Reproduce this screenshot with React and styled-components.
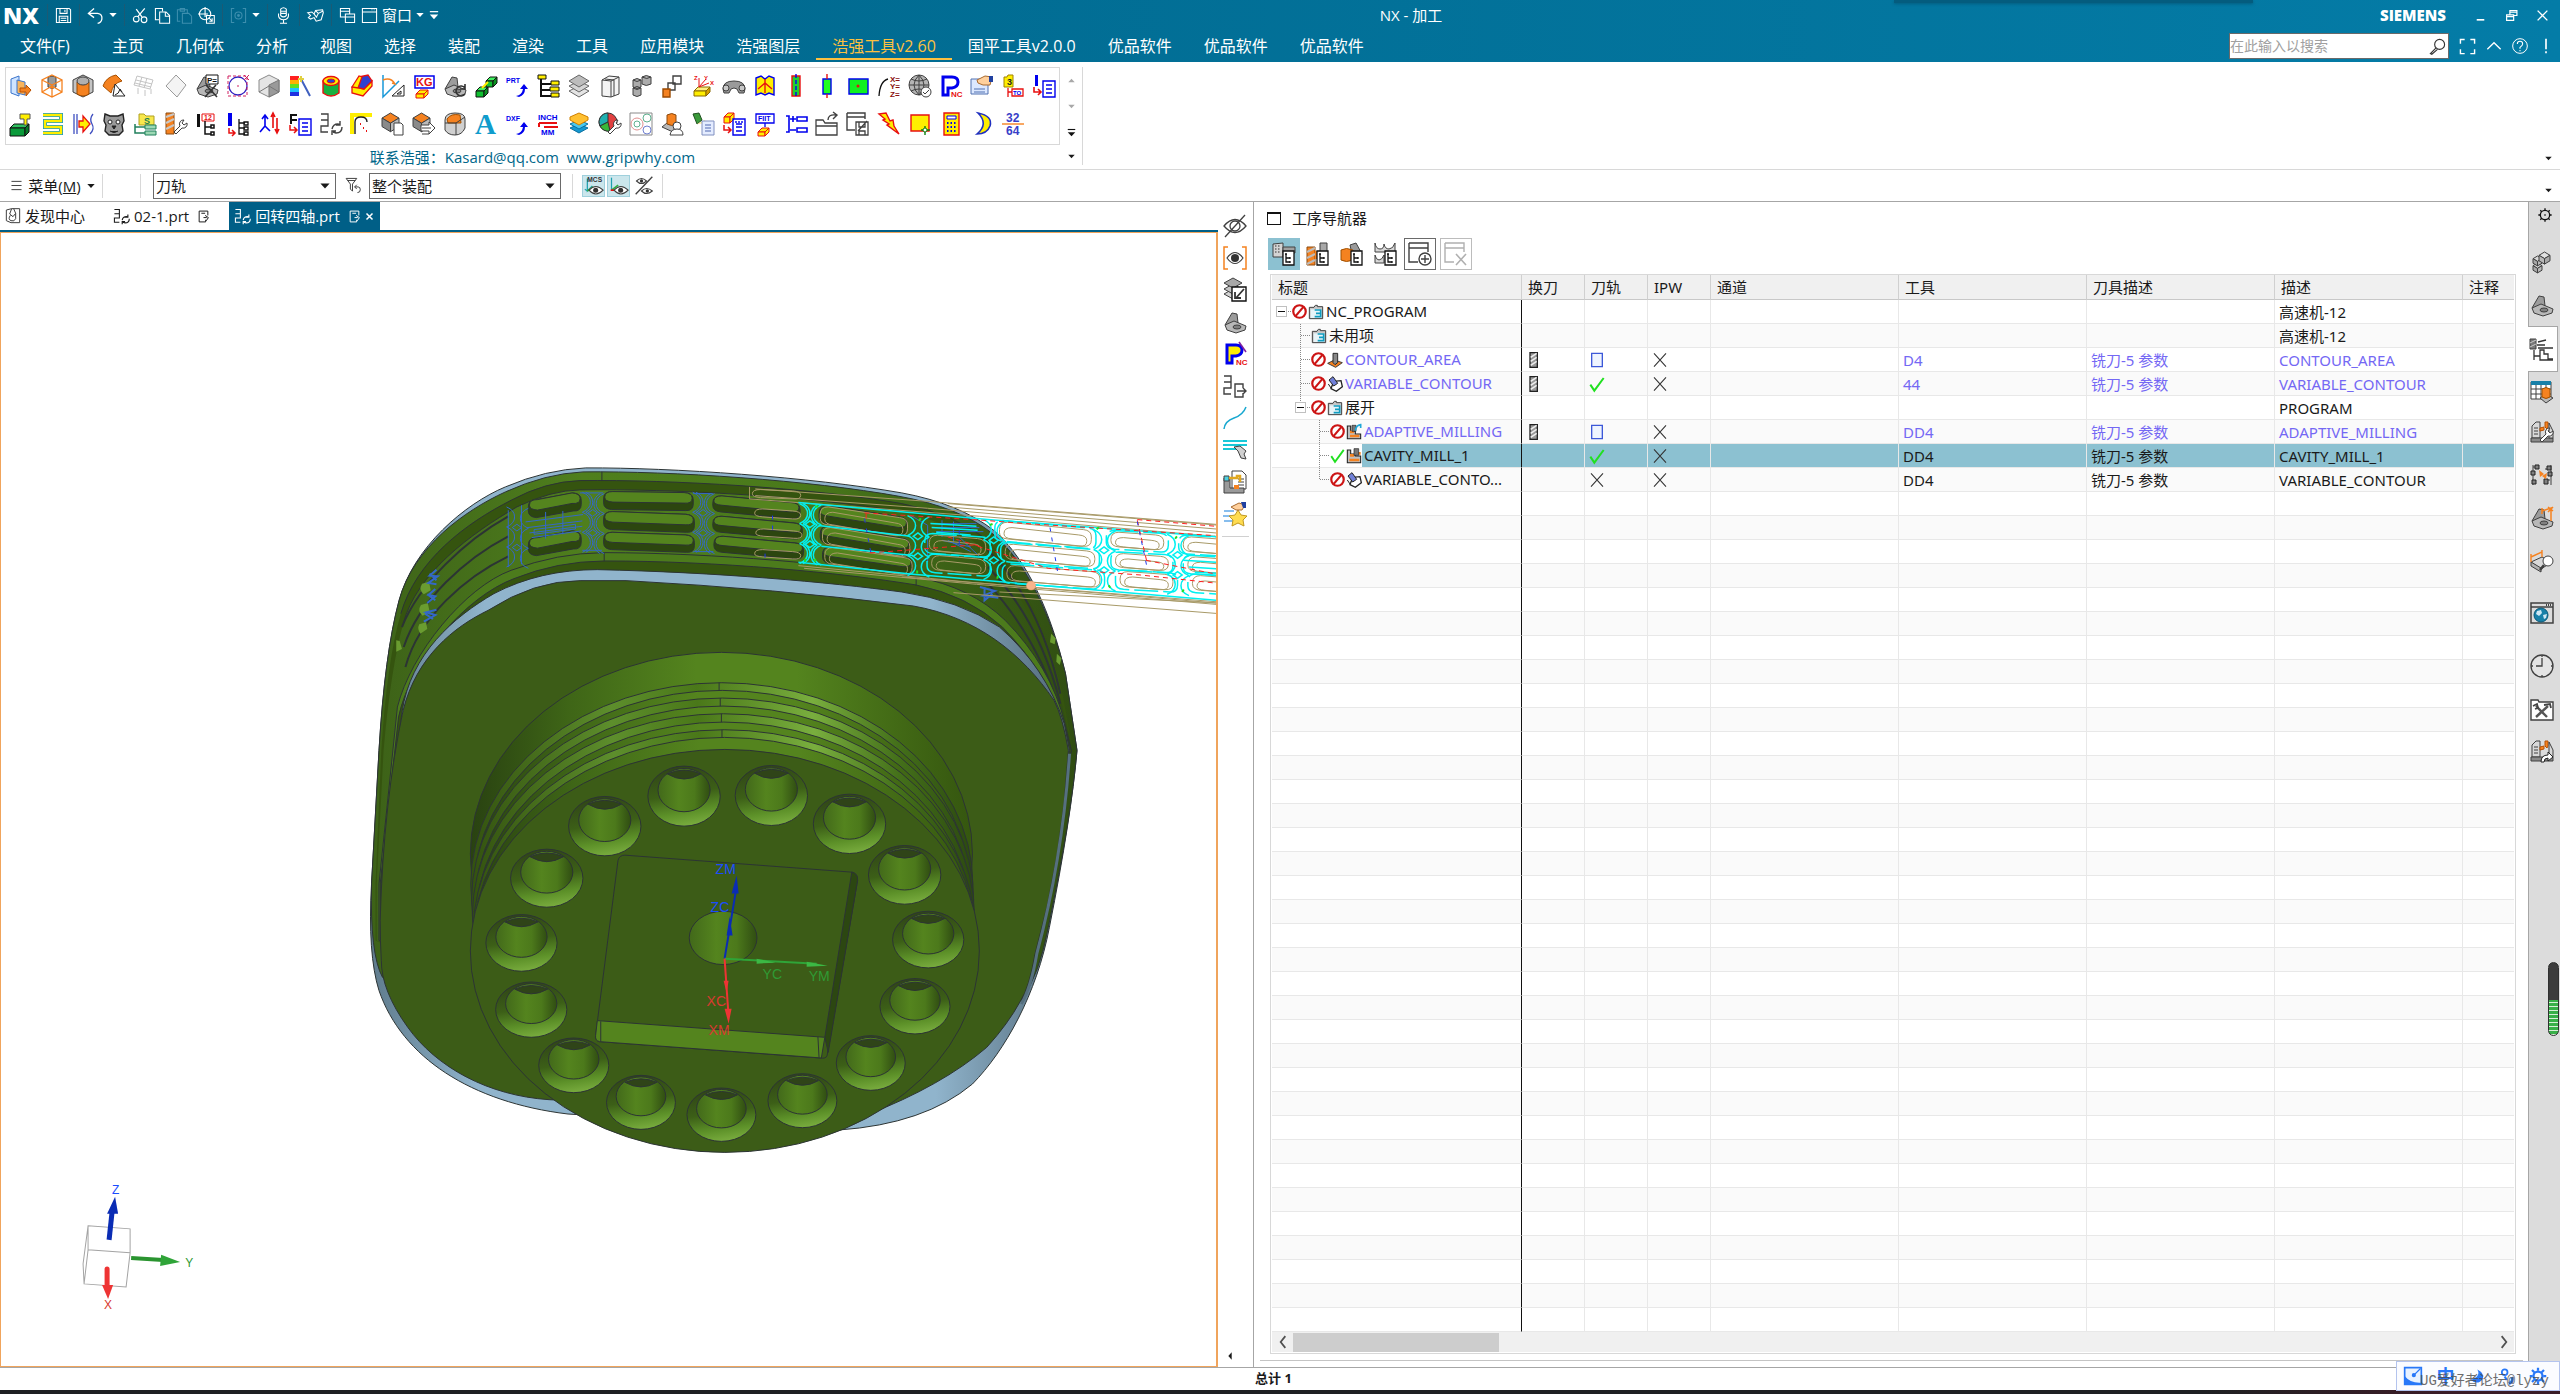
import { Fragment } from 'react'
import styled, { createGlobalStyle } from 'styled-components'

const GlobalStyle = createGlobalStyle`
    * {
        box-sizing: border-box;
    }

    body {
        margin: 0;
        background: #ffffff;
        color: #1a1a1a;
        font-family: 'Open Sans', 'Noto Sans CJK SC', sans-serif;
        font-size: 15px;
        line-height: 20px;
    }

    button, input, select {
        margin: 0;
        padding: 0;
        border: 0;
        background: none;
        color: inherit;
        font: inherit;
    }

    svg {
        display: block;
        flex-shrink: 0;
    }
`

/* ---------- icons: [d, fill, stroke, width] or { t, x, y, s, c } ---------- */

const K = '#404040'
const O = '#f58220'
const B = '#0000ee'
const R = '#e81010'
const Y = '#ffee00'

const circ = (x, y, r) => `M${x - r} ${y}a${r} ${r} 0 1 0 ${2 * r} 0a${r} ${r} 0 1 0 ${-2 * r} 0z`

const cube = (x, y, s, a, b, c, line = K) => [
    [`M${x} ${y + s * 0.3}l${s * 0.5} ${-s * 0.3}l${s * 0.5} ${s * 0.3}l${-s * 0.5} ${s * 0.3}z`, a, line],
    [`M${x} ${y + s * 0.3}v${s * 0.5}l${s * 0.5} ${s * 0.3}v${-s * 0.5}z`, b, line],
    [`M${x + s} ${y + s * 0.3}v${s * 0.5}l${-s * 0.5} ${s * 0.3}v${-s * 0.5}z`, c, line],
]

const brick = (x, y, w, h, top, front, side, line = K) => [
    [`M${x} ${y + 4}l4-4h${w}l-4 4z`, top, line],
    [`M${x} ${y + 4}h${w}v${h}h${-w}z`, front, line],
    [`M${x + w} ${y + 4}l4-4v${h}l-4 4z`, side, line],
]

const bracket = [
    ['M2 15L9 3l5 1 1 9z', '#9c9c9c', K],
    ['M2 15l9-4 12 5-1 4-9 3-9-3z', '#b8b8b8', K],
    ['M10 17a4 2 0 1 0 8 0a4 2 0 1 0-8 0z', '#808080', K],
]

const machine = [
    ['M2 6l4-4h4v16H2z', '#d8d8d8', K],
    ['M4 8h4M4 11h4M4 14h4', 'none', K],
    ['M1 18h22v4H1z', '#8a8a8a', K],
    ['M15 2h3v5l-1 2-2-2zM10 8l4-1v3l-4 1z', O, '#b85000'],
    ['M19 3l4 8v7h-4z', '#d8d8d8', K],
]

const treePage = [
    ['M11 9h11v14h-11z', '#fff', '#111', 1.3],
    ['M14 12v8h4M14 16h4M13 12h2M18 15v2M18 19v2', 'none', '#111', 1.3],
]

const wrench = ['M23 11a4 4 0 0 1-5 5l-6 6-2-2 6-6a4 4 0 0 1 4-6l-2 3 2 2z', '#fff', K]

const icons = {
    moveFace: [['M2 5l8-3v20l-8-3z', '#cfe4ff', '#3b74cc'], ['M8 6l8 2v13l-8-2z', '#f8b45c', '#3b74cc'], ['M11 14h6v-3l5 5-5 6v-4h-6z', O, '#b85000']],
    wireBox: [['M8 3q4-2 8 0v10q-4 3-8 0z', '#9a9a9a', K], ['M12 1l10 5v12l-10 5-10-5V6zM2 6l10 5 10-5M12 11v12M2 18l10-6 10 6', 'none', O, 1.3]],
    boxCylinder: [['M12 1l10 5v12l-10 5-10-5V6z', '#c4c4c4', K], ['M6 8v12q6 4 12 0V8z', O, '#9c4a00'], ['M6 7a6 4 0 1 0 12 0a6 4 0 1 0-12 0z', '#b0b0b0', K]],
    extractFace: [['M1 12Q4 3 14 1l6 6q-9 2-11 12z', O, '#a85000'], ['M11 22l2-12 10 12z', '#fff', '#222'], ['M13 21q4-1 5-6l2 3', 'none', '#222']],
    ghostGrid: [['M4 2l16 4-3 9L1 11zM9 3L6 12M14 4l-3 10M3 6l16 4M2 9l16 4M5 14v6M12 16v6M18 15v5', 'none', '#c4c4c4']],
    diamond: [['M12 1l10 10-9 12L2 12z', '#f4f4f4', '#9a9a9a']],
    paramDelete: [...bracket, ['M11 1h12v9h-12z', '#fff', '#111'], ['M11 11l11 12M21 11L10 23', 'none', '#333', 1.6], { t: 'P=', x: 12, y: 9, s: 8, c: '#111' }],
    measureCircle: [[circ(12, 12, 9), 'none', '#3020c0', 1.3], ['M2 2h19v20H2z', 'none', '#d02060', 1, '3 2'], ['M18 1l5 5M23 1l-5 5M12 11v2', 'none', '#d02060']],
    grayCube: [['M12 1l10 5v12l-10 5-10-5V6z', '#e4e4e4', '#8a8a8a'], ['M12 11l10-5v12l-10 5z', '#9a9a9a', '#777'], ['M2 18l10-6 10 6', 'none', '#777']],
    rainbow: [['M2 2h9v4H2z', '#ff2020'], ['M2 6h9v4H2z', '#ffb000'], ['M2 10h9v4H2z', '#60e020'], ['M2 14h9v4H2z', '#20c0ff'], ['M2 18h9v4H2z', '#2030e0'], ['M13 5l9 17', 'none', '#4060c0', 2], ['M13 2v6M10 5h6', 'none', '#e0d040', 2]],
    tube: [['M4 7v12q8 6 16 0V7z', '#18b040', R, 1.4], ['M4 7a8 4.500 0 1 0 16 0a8 4.500 0 1 0-16 0z', Y, R, 1.4], ['M8 7a4 2 0 1 0 8 0a4 2 0 1 0-8 0z', '#3040d0', R]],
    channelBlock: [['M2 13l7-4v5l5 1 8-8v5L13 22l-11-3z', Y, R, 1.3], ['M9 3l9-2 4 6-8 8-5-1-2-3z', '#3040d0', R, 1.3], ['M2 13l7-11 3 1-4 11z', Y, R, 1.3]],
    angleRuler: [['M2 1v22L18 7', 'none', '#1898d8', 1.5], ['M2 6q8-3 12 4l-3-1', 'none', O, 1.5], ['M23 11v11H11zM20 17v3h-4z', '#fff', '#222']],
    kg: [['M3 2h19v12H3z', '#fff', B, 1.5], { t: 'KG', x: 4, y: 12, s: 11, c: R }, ...brick(4, 16, 8, 4, Y, Y, Y, R)],
    reuse: [...bracket, ['M22 14a5 5 0 1 0 0 6M22 10v5h-5', 'none', '#333', 1.6]],
    cubePair: [...brick(2, 13, 8, 6, '#40f060', '#10c030', '#0a9020', '#111'), ...brick(12, 3, 7, 6, '#40f060', '#10c030', '#0a9020', '#111'), ['M8 14l6-6', 'none', Y, 2]],
    prt: [{ t: 'PRT', x: 1, y: 9, s: 7, c: B }, ['M11 22q6-1 7-7h-3l4-5 4 5h-3q0 6-6 8z', B]],
    treeYellow: [['M5 5v17h12M5 10h10M5 16h10', 'none', '#111', 2], ['M2 1h8v4H2zM15 7h8v4h-8zM14 13h9v4h-9zM15 19h8v4h-8z', Y, '#111']],
    layers: [['M12 12l10 5-10 6-10-6z', '#e4e4e4', '#666'], ['M12 7l10 5-10 6-10-6z', '#d4d4d4', '#666'], ['M12 1l10 6-10 6L2 7z', '#bcbcbc', '#666']],
    book: [['M4 6l7-4 10 1v17l-8 3-9-1z', '#f4f4f4', K], ['M4 6l9 1v16M7 5l9 1v16M13 7l8-4', 'none', K]],
    canisters: [['M4 14q4-3 8 0v7q-4 3-8 0zM4 6q4-3 8 0v7q-4 3-8 0zM13 3q4-3 9 0v7q-5 3-9 0z', '#acacac', K], ['M4 14q4 3 8 0M4 6q4 3 8 0M13 3q5 3 9 0', 'none', K]],
    squares: [['M13 2h8v8h-8zM8 9h7v7H8z', '#fff', K, 1.4], ['M3 15h7v8H3z', O, '#9c4a00', 1.4]],
    axisBox: [...brick(3, 13, 12, 5, '#fff080', Y, '#d8a000', '#8a6a00'), ['M8 13V4M8 13l10-4M8 13l7-8', 'none', R], { t: 'Z', x: 3, y: 6, s: 6, c: R }, { t: 'Y', x: 13, y: 6, s: 6, c: R }, { t: 'X', x: 19, y: 11, s: 6, c: R }],
    pipe: [['M1 15q0-8 11-8t11 8l-1 4h-5l-2-4q-3-2-6 0l-2 4H2z', '#9a9a9a', K], [circ(4, 14, 3), '#c8c8c8', K], [circ(20, 14, 3), '#c8c8c8', K]],
    mapPin: [['M3 4l5-2 4 3 4-3 5 2v17l-5-2-4 2-4-2-5 2z', Y, B, 1.4], ['M12 5v14M5 15l7-6 7 6', 'none', R, 1.4]],
    greenBar: [['M8 2h8v20H8z', '#20d030', R, 1.4], ['M12 0v24', 'none', B, 1.4, '4 2']],
    greenPin: [['M8 5h8v15H8z', '#20ff20', B, 1.4], ['M12 0v5M12 20v4', 'none', R, 1.4]],
    greenRect: [['M3 5h19v15H3z', '#10f020', B, 1.4], [circ(12, 12, 1.5), R]],
    xyz: [['M2 22q1-15 9-17', 'none', '#111', 1.3], { t: 'X=', x: 13, y: 8, s: 8, c: '#8a1010' }, { t: 'Y=', x: 13, y: 15, s: 8, c: '#8a1010' }, { t: 'Z=', x: 13, y: 23, s: 8, c: '#8a1010' }],
    globeCheck: [[circ(11, 11, 10), '#b4b4b4', K], ['M1 11h20M11 1v20M3 5q8 4 16 0M3 17q8-4 16 0M11 1q-10 10 0 20M11 1q10 10 0 20', 'none', K], [circ(18, 18, 5), '#fff', K], ['M15 18l2 2 4-4', 'none', K]],
    postNc: [['M4 21V3h9q6 0 6 5t-6 6H9v7z', '#fff', B, 3], { t: 'NC', x: 12, y: 23, s: 8, c: R }],
    handCard: [['M1 5h17v15H1z', '#dce8ff', '#5070b0'], ['M4 15h11M4 18h11', 'none', '#5070b0'], ['M7 6l8-4 7 1-2 8h-7l-5-2z', '#ffd09c', '#a86a30'], ['M19 2h4v6h-4z', '#2040a0']],
    numberTo: [['M3 3h3l1-2h5v12H3z', Y, '#a08000'], { t: '3', x: 6, y: 11, s: 9, c: '#222' }, ['M7 14v9M7 18h4M11 15h11v7h-11z', 'none', R, 1.3], { t: 'TO', x: 12, y: 21, s: 6, c: B }],
    listBlue: [['M3 1h3v11H3z', B], ['M2 13v5h6M6 15l3 3-3 3', 'none', R, 1.6], ['M11 7h12v16h-12zM14 11h6M14 15h6M14 19h6', 'none', B, 1.4]],
    greenMachine: [...brick(1, 12, 15, 8, '#30c060', '#0a9a3a', '#087828', '#111'), ['M11 2h10v5h-3v6h-3V7h-4z', Y, '#555']],
    yellowZig: [['M3 3h18v6H5v6h16v6H3', 'none', '#1898c8', 4], ['M3 3h18v6H5v6h16v6H3', 'none', Y, 2.4]],
    yellowArrow: [['M3 2v20M6 2v20M22 2q-4 5-1 10t-2 10', 'none', '#4050c0', 1.3], ['M8 9h4V4l7 8-7 8v-5H8z', Y, R, 1.3]],
    tiger: [['M3 2l5 2h8l5-2 1 7-2 4 1 6-4 4H7l-4-4 1-6-2-4z', '#9a9a9a', '#222', 1.4], [circ(8, 10, 2), '#fff', '#222'], [circ(16, 10, 2), '#fff', '#222'], ['M10 14h4l-2 3zM8 19q4 3 8 0', '#222', '#222']],
    folderTree: [['M6 2h5l2 2h8v9H6z', '#f8e84c', '#b0a020'], { t: 'S', x: 11, y: 12, s: 9, c: '#208050' }, ['M2 12v9h10M2 15h10', 'none', '#20805c', 1.5], ['M12 13h11v4H12zM12 19h11v4H12z', '#9cd8b4', '#20805c']],
    drillWrench: [['M2 1h8v21H2z', O, '#8a4a10'], ['M2 5l8-3M2 11l8-4M2 17l8-4', 'none', '#c8c8c8', 2], wrench],
    tree12: [['M2 2h3v13H2z', '#111'], ['M7 2h12v7H7z', '#fff', R], { t: '12', x: 9, y: 8, s: 7, c: R }, ['M10 9v13h6M10 15h6M16 13h3v3h-3zM16 20h3v3h-3z', 'none', '#111', 1.5]],
    treeBlue: [['M2 1h4v13H2z', B], ['M3 16v5h6M6 18l3 3-3 3', 'none', R, 1.5], ['M13 7v15h6M13 11h6M13 16h6M18 10h4v3h-4zM18 15h4v3h-4zM18 20h4v3h-4z', 'none', '#111', 1.3]],
    axes: [['M8 14V4M5 7l3-4 3 4M8 14l-5 6M8 14l5 5', 'none', B, 1.6], ['M16 3v13M20 20V6M14 5l2-4 2 4M18 17l2 4 2-4', 'none', R, 1.6]],
    treeList: [['M3 2v10M3 3h6M3 8h6', 'none', '#111', 2], ['M2 13v5h6M6 15l3 3-3 3', 'none', R, 1.5], ['M11 7h12v16h-12zM14 11h6M14 15h6M14 19h6', 'none', B, 1.4]],
    zigRefresh: [['M2 2h7v6H2M2 8h7v6H2v6h7', 'none', K, 1.3], ['M13 17q1-5 6-5l2 1M21 9v4h-4M23 15q0 6-6 6l-3-1M13 23v-4h4', 'none', K, 1.4]],
    yellowPath: [['M2 22V3h20', 'none', Y, 4], ['M5 22V10q0-5 6-5t6 5', '#fff', '#222', 1.4], ['M10 12h1M13 16h1M16 19h1', 'none', R, 2]],
    boxCopy: [...cube(1, 1, 17, O, '#8a8a8a', '#bababa'), ['M13 11h7l2 2v10h-9z', '#fff', K]],
    boxStack: [...cube(1, 1, 17, O, '#8a8a8a', '#bababa'), ['M9 13h8v-3l6 6-6 6v-3H9z', '#fff', K], ['M10 16h9M10 22h7', 'none', K]],
    boxRound: [['M2 8q0-7 10-7t10 6v9q-3 7-10 7T2 18z', '#d0d0d0', K], ['M4 7q4-6 13-4l1 8H5z', O, '#a05000'], ['M2 11h11l9-6M13 11v12', 'none', K]],
    letterA: [{ t: 'A', x: 1, y: 22, s: 29, c: '#109ccc', serif: true }],
    dxf: [{ t: 'DXF', x: 1, y: 9, s: 7, c: B }, ['M11 22q6-1 7-7h-3l4-5 4 5h-3q0 6-6 8z', B]],
    inch: [{ t: 'INCH', x: 2, y: 8, s: 8, c: B }, ['M3 11h18M8 15h14M3 11v4', 'none', R, 2], { t: 'MM', x: 5, y: 23, s: 8, c: B }],
    layersColor: [['M12 12l9 4-9 5-9-5z', '#1498d0', '#0a70a0'], ['M12 8l9 4-9 5-9-5z', '#48c8f0', '#0a70a0'], ['M12 1l9 4v3l-9 5-9-5V5z', '#ffc030', '#d08000']],
    colorWrench: [[circ(10, 10, 9), '#e04040', '#333'], ['M10 10V1a9 9 0 0 0-8 13z', '#20b0b0', '#333'], ['M10 10l-8 4a9 9 0 0 0 10 5z', '#38b838', '#333'], wrench],
    circles: [['M1 1h22v22H1z', 'none', '#8a8a8a'], [circ(8, 12, 6), 'none', '#e09090'], [circ(8, 12, 3), 'none', '#60b090'], [circ(18, 6, 4), 'none', '#60b090'], [circ(18, 18, 4), 'none', '#7080d0']],
    stampUser: [['M2 15l5-4h8l4 4-6 5z', '#b8b8b8', K], ['M7 3q5-3 9 0v9q-4 3-9 0z', O, '#8a4a10'], [circ(17, 14, 4), '#fff', K], ['M10 23q1-6 7-6t6 6z', '#fff', K]],
    lampList: [['M2 2l6-1 3 7-5 4z', '#3a9a3a', '#205020'], ['M6 12l8-4 1 3z', '#ffe890'], ['M11 9h12v14H11z', '#e4ecff', '#8090c0'], ['M14 13h6M14 16h6M14 19h6', 'none', '#5068b0']],
    boxList: [...brick(2, 1, 6, 6, Y, Y, Y, R), ['M2 13v5h6M6 15l3 3-3 3', 'none', R, 1.5], ['M11 7h12v16h-12zM14 12h6M14 15h6M14 19h6M14 9v2M17 9v2M20 9v2', 'none', B, 1.4]],
    fit: [['M3 2h18v9H3zM12 11v4', '#fff', B, 1.3], { t: 'FIIT', x: 5, y: 9, s: 7, c: B }, ...brick(5, 16, 7, 4, Y, Y, Y, R)],
    plusMinus: [['M2 4h3v16H2M6 7h6M9 4v6M6 18h6M13 5h10v4H13zM13 16h10v4H13z', 'none', B, 1.6]],
    openOut: [['M1 8h7l2 3h12v12H1zM1 14h21', '#fff', K, 1.3], ['M13 8q0-6 8-5M18 0l4 3-4 4', 'none', K, 1.4]],
    windowSave: [['M1 1h18v6M1 1v17h8M1 5h18', 'none', K, 1.4], ['M10 10h12v13H10zM13 10v5h6v-5M13 23v-4h6v4M21 9l-9 10', '#fff', K, 1.3]],
    bolt: [['M2 2l7-1 4 8 3-1 1 6 5 8-12-9 2-1-6-4 2-1z', Y, R, 1.4]],
    yellowSquare: [['M3 3h18v16H3z', Y, R, 1.4], ['M17 14v9M13 18h9', 'none', '#108010', 1.4], [circ(17, 18, 2), '#fff', '#108010']],
    calc: [['M5 1h15v22H5z', Y, R, 1.4], ['M8 4h9v3H8z', '#fff', B], ['M8 11h10M8 15h10M8 19h10', 'none', B, 1.8, '1.5 2']],
    moon: [['M8 1q15 3 12 13-3 8-13 8 12-10 1-21z', Y, '#2030c0', 1.6]],
    n3264: [{ t: '32', x: 5, y: 10, s: 12, c: '#3840c8' }, ['M1 12h22', 'none', O, 1.4], { t: '64', x: 5, y: 23, s: 12, c: '#3840c8' }],

    eyeOff: [['M1 12q11-13 22 0-11 13-22 0z', 'none', K, 1.3], [circ(12, 12, 5), 'none', K, 1.3], ['M2 23L22 1', 'none', K, 1.3]],
    eyeFrame: [['M5 1H1v22h4M19 1h4v22h-4', 'none', O, 1.5], ['M4 12q8-11 16 0-8 11-16 0z', 'none', K, 1.2], [circ(12, 12, 4), '#333']],
    layersGo: [['M10 11l9 5-9 5-9-5z', '#d4d4d4', K], ['M10 6l9 5-9 5-9-5z', '#c4c4c4', K], ['M10 0l9 5-9 5-9-5z', '#a8a8a8', K], ['M9 9h14v14H9z', '#fff', '#111', 1.4], ['M21 11l-8 9M12 14v6h6', 'none', '#333', 1.8]],
    bracketGray: bracket,
    postPurple: [['M4 21V3h9q6 0 6 5t-6 6H9v7z', Y, B, 3], ['M16 0l7 10', 'none', '#8020a0', 1.6], { t: 'NC', x: 13, y: 23, s: 8, c: R }],
    zigExport: [['M1 2h7v6H1M1 8h7v6H1v6h7', 'none', K, 1.4], ['M20 14v-4h-8v13h8v-4M14 17h9M20 14l3 3-3 3', 'none', K, 1.4]],
    curve: [['M1 23q1-8 10-11T23 1', 'none', '#18a8d0', 1.5]],
    linesWrench: [['M0 3h24M0 7h24M0 11h14', 'none', '#18c8d8', 2], ['M11 9l6-1 6 5-2 3 2 5-5-1-3-7z', '#d0d0d0', K]],
    machineDoc: [['M9 1h10l4 4v14H9z', '#fff', K], ['M15 9h6M15 12h6M15 15h6', 'none', K], ['M1 8h6v10h14v5H1z', '#9a9a9a', K], ['M1 6h5v5H1z', '#50d0e0', K], ['M6 8h8v-2h3v6', 'none', '#e0a820', 2.5], ['M11 15h5v4h-5z', O]],
    starHand: [['M1 9h10M0 14h8M1 19h9', 'none', '#60a8e8', 1.5], ['M15 8l3 5 6 1-4 4 1 6-6-3-6 3 1-6-4-4 6-1z', '#ffdc50', '#c09820'], ['M8 5l8-4 6 2-3 5h-6z', '#ffd09c', '#a86a30'], ['M18 0h5v6h-3z', '#2040a0']],

    gear: [[circ(12, 12, 7), 'none', '#111', 2], ['M12 2v3M12 19v3M2 12h3M19 12h3M5 5l2 2M17 17l2 2M19 5l-2 2M5 19l2-2M12 11v2', 'none', '#111', 2]],
    parts: [...cube(3, 12, 9, '#d8d8d8', '#a8a8a8', '#b8b8b8'), ...cube(3, 5, 9, '#d8d8d8', '#a8a8a8', '#b8b8b8'), ...cube(9, 1, 11, '#e0e0e0', '#b8b8b8', '#a8a8a8')],
    opNav: [['M1 2h6v10H1z', '#7a7a7a', K], ['M1 6l6-3M1 10l6-3', 'none', '#ccc'], ['M9 5l8-2M8 8h8M9 11h15M5 13v10M5 19h6v-6h4v4h4v5h5M11 19v4h13', 'none', '#333', 1.3]],
    gridTool: [['M1 2h20v17H1z', '#fff', K], ['M1 1h20v4H1z', '#1880a8'], ['M1 9h20M1 14h20M6 5v14M11 5v14M16 5v14', 'none', K], ['M10 18l6-4 7 4-7 5z', '#b8b8b8', K], ['M12 9q4-3 8 0v8q-4 3-8 0z', O, '#a05000']],
    machineWrench: [...machine, wrench],
    nodes: [['M3 2v20M3 4h5M3 10h2M21 2v20M20 6h-5M20 17h-3', 'none', K], ['M5 2h4v4H5zM1 8h4v4H1zM2 17h4v4H2zM17 3h4v4h-4zM18 9h4v4h-4zM14 16h4v5h-4z', '#808080', '#222'], ['M9 7l5 4-4 3zM12 13l5-3-1 6z', O]],
    bracketDim: [...bracket, ['M12 5l9-3v13M12 2v6M18 1l5 4M23 1l-5 5', 'none', O, 1.5]],
    blockZoom: [['M1 13l11-5 10 5-11 7z', '#d8d8d8', K], ['M1 13v4l10 6v-4z', '#b0b0b0', K], ['M1 8l11-5M1 5v8M12 1v7', 'none', O, 1.4], [circ(18, 12, 5), '#fff', K], ['M14 16l-4 5', 'none', K, 2.5]],
    globeWindow: [['M1 2h22v20H1zM1 6h22', '#dcdcdc', K, 1.5], [circ(11, 14, 7), '#1880a8', '#0a5878'], ['M7 10l4-1 1 3-3 3-3-2zM13 14l4-1-1 4-2 1z', '#cfe8f4'], ['M16 4h1M18 4h1M20 4h1', 'none', '#111', 1.5]],
    clock: [[circ(12, 12, 11), '#e4e4e4', K, 1.3], ['M12 4v8H6M12 1v2M12 21v2M1 12h2M21 12h2', 'none', K, 1.3]],
    toolFolder: [['M1 3h7l1 2h14v18H1z', '#fff', K, 1.4], ['M6 9l11 11M18 9L6 20', 'none', '#555', 2.4], ['M14 8l6-1 1 4M3 9l4-2 1 4-3 1', 'none', '#444', 1.8]],
    machineGo: [...machine, ['M11 23q0-7 7-7v-3l5 5-5 4v-3q-4 0-4 4z', '#fff', '#222']],

    folder: [['M2 5h7l2-3h3v2h8v18H2z', '#c8c8c8', K, 1.5], ['M4 8h16v13H4z', '#e8f4f8'], ['M10 9h9v5h-7M19 14v5h-9', 'none', '#109cc0', 2.5]],
    contourArea: [['M1 17l10-5 12 4-10 7z', O, '#333', 1.4], ['M9 2h7v14l-4 3-3-3z', '#888', '#222', 1.4]],
    variable: [['M10 8l11-1 2 9-9 7-8-4z', '#fff', '#222', 2], ['M3 6l6-5 7 10-6 4z', '#7080d8', '#222', 1.5], ['M2 12l4 6', 'none', '#222', 1.5]],
    adaptive: [['M2 3v19h20v-7h-8v-4H7V3z', '#c0c0c0', '#222', 1.6], ['M6 18h14M6 12h6', 'none', O, 4], ['M9 2h6v9H9z', '#777', '#222'], ['M14 10q1-8 8-9v5', 'none', '#20a8d8', 2.5]],
    cavity: [['M2 3v19h20V12h-8V9H7V3z', '#c0c0c0', '#222', 1.6], ['M5 18h15M6 11h6M16 8h6', 'none', O, 4], ['M12 1h7v10h-7z', '#777', '#222']],
    blocked: [[circ(12, 12, 10), '#fff', '#cc1414', 3.5], ['M6 19L18 5', 'none', '#cc1414', 3.5]],
    check: [['M2 13l6 9L22 3', 'none', '#20e020', 3]],
    cross: [['M3 2l18 20M21 2L3 22', 'none', '#333', 1.6]],
    cutter: [['M6 1h11v22H6z', '#999', '#222', 2], ['M7 8l9-6M7 14l9-6M7 20l9-6', 'none', '#eee', 2.4]],
    sheet: [['M4 2h16v20H4z', '#eef4ff', '#3c58d8', 2]],

    viewProgram: [['M1 2l10-1v14H1z', '#d4d4d4', K], ['M3 4h6M3 7h6M3 10h6', 'none', '#333', 1.2, '1.5 1.5'], ['M11 5h12v6H11z', '#a0a0a0', K], ...treePage],
    viewTool: [['M1 5h8v18H1z', O, '#8a4a10'], ['M1 10l8-4M1 16l8-4M1 22l8-4', 'none', '#bbb', 2], ['M14 1h7v10h-7z', '#a8a8a8', K], ['M9 9h6v8H9z', O], ...treePage],
    viewGeometry: [['M10 3l6-2 6 11-8 9z', '#9a9a9a', K], ['M1 8q5-3 12 0v10q-7 3-12 0z', O, '#a05000'], ...treePage],
    viewMethod: [['M1 1q1 6 5 6t4-5q1 5 5 5t6-6v9H1z', '#d8d8d8', K], ['M1 13q1 5 4 5t5-5v8H1z', '#d8d8d8', K], ...treePage],
    windowAdd: [['M1 1h19v9M1 1v19h9M1 6h19', 'none', K, 1.4], [circ(17, 17, 6), '#fff', K, 1.4], ['M17 13v8M13 17h8', 'none', K, 1.4]],
    windowDelete: [['M1 1h19v9M1 1v19h9M1 6h19', 'none', '#b0b0b0', 1.4], ['M12 12l10 11M22 12L12 23', 'none', '#b0b0b0', 1.6]],

    mcs: [['M4 3v15l6-6M4 18l-3-2', 'none', '#20a0b0', 1.5], ['M4 18l7-5', 'none', '#30b040', 2], { t: 'MCS', x: 4, y: 7, s: 8, c: '#333' }, ['M6 17q8-9 17 0-9 9-17 0z', '#fff', K, 1.3], [circ(14, 17, 3), '#333']],
    wcs: [['M3 2v14', 'none', '#20a0b0', 1.5], ['M3 17l8-6', 'none', '#30b040', 2], ['M2 17h4', 'none', R, 2], ['M6 17q8-9 17 0-9 9-17 0z', '#fff', K, 1.3], [circ(14, 17, 3), '#333']],
    eyesOff: [['M3 6q6-6 12 0-6 6-12 0zM9 18q6-6 13 0-7 6-13 0z', 'none', K, 1.3], [circ(9, 6, 2), '#333'], [circ(16, 18, 2), '#333'], ['M2 22L22 1', 'none', K, 1.6]],
    filter: [['M3 2h15l-6 8v10l-3-3v-7zM5 5h11', 'none', K, 1.4], ['M15 14h5q3 0 3 4t-4 4M18 11l-3 3 3 3', 'none', K, 1.4]],
    discover: [['M2 3l8-2h12v21H9l-7-3z', 'none', K, 1.5], ['M10 1l-3 8 5 4 4-5-3-7M16 8v8q-2 5-7 3t-1-8', 'none', K, 1.5]],
    tabDoc: [['M20 10V2H4v20h12v-4', 'none', 'currentColor', 1.8], ['M12 14h6M15 10l6 4-4 6M8 6h7', 'none', 'currentColor', 1.8]],
    tabZig: [['M2 2h7v6H2M2 8h7v6H2v6h7', 'none', 'currentColor', 1.5], ['M13 17q1-5 6-5l2 1M21 9v4h-4M23 15q0 6-6 6l-3-1M13 23v-4h4', 'none', 'currentColor', 1.6]],
    close: [['M4 4l16 16M20 4L4 20', 'none', 'currentColor', 4]],

    save: [['M2 2h18l2 2v18H2z', 'none', '#fff', 1.5], ['M7 2v7h10V2M6 22v-9h12v9M8 16h8M8 19h8M14 4v3', 'none', '#fff', 1.5]],
    undo: [['M10 2L2 9l8 6M3 9h12q7 1 6 8-1 5-6 6', 'none', '#fff', 1.8]],
    cut: [[circ(6, 17, 4), 'none', '#fff', 1.6], [circ(17, 18, 4), 'none', '#fff', 1.6], ['M8 14L18 2M14 14L6 3', 'none', '#fff', 1.8]],
    copy: [['M7 18H2V2h10v4M8 7h9l5 5v11H8zM16 7v6h6', 'none', '#fff', 1.5]],
    paste: [['M6 20H2V4h14v4M6 2h6v4H6zM9 9h9l4 4v10H9z', 'none', '#3d8fae', 1.5]],
    pick: [[circ(10, 10, 8), 'none', '#fff', 1.6], ['M10 0v14M0 10h14M12 12h11v11H12zM15 15l5 5M20 16v4h-4', 'none', '#fff', 1.5]],
    focus: [['M6 2H2v20h4M18 2h4v20h-4', 'none', '#3d8fae', 1.5], [circ(12, 12, 5), 'none', '#3d8fae', 1.5], [circ(12, 12, 2), '#3d8fae']],
    mic: [['M8 3q4-4 8 0v9q-4 4-8 0zM8 6h8M8 9h8M5 9v4q1 5 7 5t7-5V9M12 18v5M7 23h10', 'none', '#fff', 1.5]],
    gesture: [['M1 8l6-1 3 3 2-5 10-1 1 4-3 10-7 2-3-5-5 2-3-2 3-3zM12 5l4 4-3 6M10 10l4 5M16 9l6-3', 'none', '#fff', 1.5]],
    windows: [['M2 2h13v12H2zM2 6h13', 'none', '#fff', 1.5], ['M9 10h13v12H9zM9 14h13', '#01688e', '#fff', 1.5]],
    window: [['M2 2h20v20H2zM2 7h20M15 4h1M18 4h1', 'none', '#fff', 1.5]],
    expand: [['M8 2H2v6M16 2h6v6M22 16v6h-6M8 22H2v-6', 'none', '#fff', 2]],
    chevronUp: [['M2 17L12 7l10 10', 'none', '#fff', 2]],
    help: [[circ(12, 12, 11), 'none', '#fff', 1.5], ['M8 9q0-4 4-4t4 4q0 2-4 5v2M12 18v2', 'none', '#fff', 1.6]],
    bang: [['M12 1v16M12 20v3', 'none', '#fff', 2.5]],
    minimize: [['M5 20h14', 'none', '#fff', 3]],
    restore: [['M9 3h13v9H9zM9 6h13', 'none', '#fff', 2.2], ['M3 11h13v10H3zM3 14h13', '#0379a3', '#fff', 2.2]],
    closeWin: [['M3 3l18 18M21 3L3 21', 'none', '#fff', 2.6]],
    search: [[circ(15, 9, 7), 'none', '#333', 1.6], ['M10 14l-8 8 2 1 8-7', 'none', '#333', 1.6]],
    menu: [['M1 3h22M1 12h22M1 21h22', 'none', '#333', 2]],

    caretDown: [['M1 6h22L12 18z', 'currentColor']],
    caretUp: [['M1 18h22L12 6z', 'currentColor']],
    caretLeft: [['M17 1v22L7 12z', 'currentColor']],
    overflow: [['M2 4h20', 'none', 'currentColor', 3], ['M2 11h20l-10 11z', 'currentColor']],
    left: [['M16 2L8 12l8 10', 'none', '#505050', 3]],
    right: [['M8 2l8 10-8 10', 'none', '#505050', 3]],

    imeLogo: [['M2 2h20v20H2z', '#e8f2ff', '#2878f8', 2], ['M2 12q7 9 20 8v2H2z', '#2878f8'], [circ(13, 11, 2.5), '#2878f8'], ['M14 10l7-7', 'none', '#2878f8', 1.5]],
    imeMoon: [['M13 2q6 9-9 15 10 8 17-2 2-9-8-13z', '#2878f8']],
    imePunct: [[circ(8, 6, 4), 'none', '#2878f8', 2.5], ['M18 13q3 6-4 9', 'none', '#2878f8', 4], ['M8 12l3 5', 'none', '#2878f8', 3]],
    imeGear: [[circ(12, 12, 6), 'none', '#2878f8', 3], ['M12 1v4M12 19v4M1 12h4M19 12h4M4 4l3 3M17 17l3 3M20 4l-3 3M4 20l3-3', 'none', '#2878f8', 3]],
}

const IconSvg = styled.svg`
    overflow: visible;
`

function Icon({ name, size = 24 }) {
    return (
        <IconSvg width={size} height={size} viewBox="0 0 24 24" aria-hidden="true">
            {icons[name].map((p, i) =>
                p.t ? (
                    <text
                        key={i}
                        x={p.x}
                        y={p.y}
                        fontSize={p.s}
                        fill={p.c}
                        fontFamily={p.serif ? 'Liberation Serif' : 'Liberation Sans'}
                        fontWeight="bold"
                    >
                        {p.t}
                    </text>
                ) : (
                    <path key={i} d={p[0]} fill={p[1]} stroke={p[2]} strokeWidth={p[3]} strokeDasharray={p[4]} />
                )
            )}
        </IconSvg>
    )
}

/* ---------- data ---------- */

const ribbonRows = [
    ['moveFace', 'wireBox', 'boxCylinder', 'extractFace', 'ghostGrid', 'diamond', 'paramDelete', 'measureCircle', 'grayCube', 'rainbow', 'tube', 'channelBlock', 'angleRuler', 'kg', 'reuse', 'cubePair', 'prt', 'treeYellow', 'layers', 'book', 'canisters', 'squares', 'axisBox', 'pipe', 'mapPin', 'greenBar', 'greenPin', 'greenRect', 'xyz', 'globeCheck', 'postNc', 'handCard', 'numberTo', 'listBlue'],
    ['greenMachine', 'yellowZig', 'yellowArrow', 'tiger', 'folderTree', 'drillWrench', 'tree12', 'treeBlue', 'axes', 'treeList', 'zigRefresh', 'yellowPath', 'boxCopy', 'boxStack', 'boxRound', 'letterA', 'dxf', 'inch', 'layersColor', 'colorWrench', 'circles', 'stampUser', 'lampList', 'boxList', 'fit', 'plusMinus', 'openOut', 'windowSave', 'bolt', 'yellowSquare', 'calc', 'moon', 'n3264'],
]

const menus = ['主页', '几何体', '分析', '视图', '选择', '装配', '渲染', '工具', '应用模块', '浩强图层', '浩强工具v2.60', '国平工具v2.0.0', '优品软件', '优品软件', '优品软件']

const sideTools = ['eyeOff', 'eyeFrame', 'layersGo', 'bracketGray', 'postPurple', 'zigExport', 'curve', 'linesWrench', 'machineDoc', 'starHand']

const columns = ['标题', '换刀', '刀轨', 'IPW', '通道', '工具', '刀具描述', '描述', '注释']

const operations = [
    { depth: 0, open: true, status: 'blocked', type: 'folder', title: 'NC_PROGRAM', desc: '高速机-12' },
    { depth: 1, type: 'folder', title: '未用项', desc: '高速机-12' },
    { depth: 1, status: 'blocked', type: 'contourArea', title: 'CONTOUR_AREA', change: true, path: 'sheet', ipw: true, tool: 'D4', toolDesc: '铣刀-5 参数', desc: 'CONTOUR_AREA', pending: true },
    { depth: 1, status: 'blocked', type: 'variable', title: 'VARIABLE_CONTOUR', change: true, path: 'check', ipw: true, tool: '44', toolDesc: '铣刀-5 参数', desc: 'VARIABLE_CONTOUR', pending: true },
    { depth: 1, open: true, status: 'blocked', type: 'folder', title: '展开', desc: 'PROGRAM' },
    { depth: 2, status: 'blocked', type: 'adaptive', title: 'ADAPTIVE_MILLING', change: true, path: 'sheet', ipw: true, tool: 'DD4', toolDesc: '铣刀-5 参数', desc: 'ADAPTIVE_MILLING', pending: true },
    { depth: 2, status: 'check', type: 'cavity', title: 'CAVITY_MILL_1', path: 'check', ipw: true, tool: 'DD4', toolDesc: '铣刀-5 参数', desc: 'CAVITY_MILL_1', selected: true },
    { depth: 2, last: true, status: 'blocked', type: 'variable', title: 'VARIABLE_CONTO...', path: 'cross', ipw: true, tool: 'DD4', toolDesc: '铣刀-5 参数', desc: 'VARIABLE_CONTOUR' },
]

const emptyRows = Array.from({ length: 36 }, (_, i) => i)

/* ---------- frame ---------- */

const Page = styled.div`
    display: flex;
    flex-direction: column;
    height: 100vh;
    overflow: hidden;
`

const Header = styled.header`
    background: linear-gradient(90deg, #006488, #047ca7);
    color: #ffffff;
    position: relative;
`

const TopShade = styled.div`
    position: absolute;
    top: 0;
    left: 74%;
    width: 14%;
    height: 3px;
    background: #045c7e;
    box-shadow: 0 1px 3px #045c7e;
`

const TitleRow = styled.div`
    display: grid;
    grid-template-columns: 1fr auto 1fr;
    align-items: center;
    height: 30px;
`

const QuickBar = styled.div`
    display: flex;
    align-items: center;
    gap: 5px;
    padding-left: 3px;
`

const Logo = styled.span`
    min-width: 37px;
    font-size: 23px;
    font-weight: 800;
    line-height: 30px;
`

const QuickDivider = styled.i`
    width: 1px;
    height: 22px;
    margin: 0 2px;
    background: #1b5a74;
`

const PlainButton = styled.button`
    display: flex;
    align-items: center;
    justify-content: center;
    gap: 4px;
`

const AppTitle = styled.span`
    padding-left: 262px;
`

const WindowBar = styled.div`
    display: flex;
    justify-content: flex-end;
    align-items: center;
    gap: 18px;
    padding-right: 11px;
`

const Brand = styled.strong`
    margin-right: 10px;
    font-size: 15px;
    font-weight: 800;
`

const MenuRow = styled.nav`
    display: flex;
    height: 32px;
    padding-left: 4px;
    font-size: 16px;
`

const MenuTab = styled.button`
    height: 30px;
    padding: 4px 16px 0;
    border-bottom: 2px solid ${(p) => (p.$active ? '#fdc040' : 'transparent')};
    color: ${(p) => (p.$active ? '#fdc040' : '#ffffff')};
`

const FileTab = styled(MenuTab)`
    width: 92px;
    text-align: left;
`

const SearchArea = styled.div`
    display: flex;
    align-items: center;
    gap: 10px;
    margin-left: auto;
    padding-right: 6px;
`

const SearchBox = styled.label`
    display: flex;
    align-items: center;
    width: 220px;
    height: 26px;
    padding-right: 2px;
    border: 1px solid #6a6a6a;
    background: #ffffff;
    color: #333333;

    & > input {
        flex: 1;
        min-width: 0;
        font-size: 14px;
    }

    & > input::placeholder {
        color: #a0a0a0;
    }
`

const Ribbon = styled.section`
    display: flex;
    height: 108px;
    padding: 5px 0 0 5px;
    border-bottom: 1px solid #d8d8d8;
`

const RibbonGroup = styled.div`
    display: grid;
    grid-template-columns: 1055px 22px;
    grid-template-rows: 78px 20px;
    height: 98px;
    border-right: 1px solid #d8d8d8;
`

const IconGrid = styled.div`
    display: grid;
    grid-template-columns: repeat(34, minmax(0, 1fr));
    grid-template-rows: 36px 40px;
    border: 1px solid #d8d8d8;
`

const Scroller = styled.div`
    display: flex;
    flex-direction: column;
    justify-content: space-between;
    align-items: center;
    padding: 10px 0 8px;
    color: #a8a8a8;

    & > :last-child {
        color: #111111;
    }
`

const GroupCaption = styled.div`
    padding-top: 2px;
    color: #00678a;
    text-align: center;
    white-space: pre;
`

const CornerCaret = styled.div`
    display: flex;
    justify-content: center;
    align-items: center;
    margin-left: ${(p) => (p.$push ? 'auto' : '0')};
    padding: ${(p) => (p.$push ? '0 8px 0 0' : '0')};
    align-self: ${(p) => (p.$push ? 'flex-end' : 'stretch')};
    height: 22px;
`

const SelectionBar = styled.section`
    display: flex;
    align-items: center;
    height: 32px;
    border-bottom: 1px solid #a6a6a6;
`

const MenuButton = styled(PlainButton)`
    width: 102px;
    gap: 6px;
    padding-left: 4px;
`

const Divider = styled.i`
    width: 1px;
    height: 24px;
    margin-left: ${(p) => p.$before || 0}px;
    margin-right: ${(p) => p.$after || 0}px;
    background: #d8d8d8;
`

const SelectBox = styled.div`
    display: grid;
    align-items: center;
    width: ${(p) => p.$width}px;
    height: 26px;
    border: 1px solid #6a6a6a;

    & > select {
        grid-area: 1 / 1;
        height: 24px;
        padding-left: 2px;
        appearance: none;
    }

    & > svg {
        grid-area: 1 / 1;
        justify-self: end;
        margin-right: 5px;
        pointer-events: none;
    }
`

const FilterButton = styled(PlainButton)`
    width: 33px;
`

const ToggleButton = styled(PlainButton)`
    width: 23px;
    height: 22px;
    margin-right: 2px;
    border: 1px solid ${(p) => (p.$on ? '#9fd0dc' : 'transparent')};
    background: ${(p) => (p.$on ? '#cbe6ec' : 'none')};
`

const Main = styled.main`
    display: grid;
    grid-template-columns: minmax(0, 1218fr) 35px minmax(0, 1275fr) 32px;
    flex: 1;
    min-height: 0;
    border-bottom: 1px solid #a6a6a6;
`

const ViewColumn = styled.section`
    display: flex;
    flex-direction: column;
    min-height: 0;
`

const Tabs = styled.div`
    display: flex;
    height: 30px;
    border-bottom: 2px solid #005f87;
`

const DocTab = styled.button`
    display: flex;
    align-items: center;
    gap: 4px;
    padding: 0 ${(p) => (p.$active ? 6 : 19)}px 0 5px;
    background: ${(p) => (p.$active ? '#005f87' : 'none')};
    color: ${(p) => (p.$active ? '#ffffff' : '#1a1a1a')};

    & > span {
        margin-right: 4px;
    }
`

const Canvas = styled.div`
    flex: 1;
    min-height: 0;
    border: 1px solid #f0a45c;
    border-right-width: 2px;

    & > svg {
        width: 100%;
        height: 100%;
    }
`

const SideBar = styled.aside`
    display: flex;
    flex-direction: column;
    align-items: center;
    gap: 8px;
    padding: 12px 1px 5px 0;
`

const SideRule = styled.hr`
    width: 27px;
    margin: 2px 0;
    border: 0;
    border-top: 1px solid #d0d0d0;
`

const SideEnd = styled.div`
    margin-top: auto;
    margin-right: 10px;
    padding-bottom: 2px;
`

const Panel = styled.section`
    display: flex;
    flex-direction: column;
    min-height: 0;
    padding: 0 12px 6px 13px;
    border-left: 1px solid #a6a6a6;
`

const PanelTitle = styled.h2`
    display: flex;
    align-items: center;
    gap: 11px;
    height: 34px;
    margin: 0;
    font-size: 15px;
    font-weight: 400;
    padding-bottom: 2px;

    & > i {
        width: 14px;
        height: 13px;
        border: 1px solid #111111;
        border-top-width: 2px;
    }
`

const PanelTools = styled.div`
    display: flex;
    gap: 2px;
    height: 38px;
    padding: 2px 0 0 1px;
`

const ViewButton = styled(PlainButton)`
    width: 32px;
    height: 32px;
    margin-right: ${(p) => (p.$framed ? 2 : 0)}px;
    border: 1px solid ${(p) => (p.$framed ? p.$framed : 'transparent')};
    background: ${(p) => (p.$on ? '#8cc1d1' : 'none')};
`

const TreeFrame = styled.div`
    display: flex;
    flex-direction: column;
    flex: 1;
    min-height: 0;
    margin-left: 3px;
    border: 1px solid #d8d8d8;
`

const TreeScroll = styled.div`
    flex: 1;
    min-height: 0;
    padding: 0 1px;
    overflow: hidden;
`

const TreeTable = styled.table`
    width: 100%;
    table-layout: fixed;
    border-collapse: separate;
    border-spacing: 0;
    font-family: 'Noto Sans', 'Noto Sans CJK SC', sans-serif;
`

const HeadCell = styled.th`
    height: 25px;
    padding: 0 0 0 6px;
    border-right: 1px solid #d0d0d0;
    border-bottom: 1px solid #c8c8c8;
    background: #f0f0f0;
    font-weight: 400;
    text-align: left;

    &:last-child {
        border-right: 0;
    }
`

const Row = styled.tr`
    color: ${(p) => (p.$pending ? '#7468f4' : '#1a1a1a')};

    &:nth-child(even) {
        background: #fafafa;
    }

    & > td {
        height: 24px;
        padding: 0 0 0 4px;
        border-right: 1px solid #e8e8e8;
        border-bottom: 1px solid #e8e8e8;
        line-height: 20px;
        white-space: nowrap;
    }

    & > td:first-child {
        padding: 0 0 0 1px;
        border-right-color: #111111;
    }

    & > td:last-child {
        border-right: 0;
    }

    & > td:not(:first-child) {
        background: ${(p) => (p.$selected ? '#8cc1d1' : 'transparent')};
    }
`

const TitleCell = styled.div`
    display: flex;
    align-items: center;
    height: 23px;
    overflow: hidden;
`

const Indent = styled.span`
    width: ${(p) => p.$depth * 19}px;
    flex-shrink: 0;
`

const TypeSlot = styled.span`
    width: 16px;
    flex-shrink: 0;
`

const TitleText = styled.span`
    flex: 1;
    padding-left: 2px;
    line-height: 23px;
    background: ${(p) => (p.$selected ? '#8cc1d1' : 'none')};
`

const ScrollTrack = styled.div`
    display: flex;
    align-items: center;
    height: 20px;
    margin: 0 1px 1px;
    background: #f0f0f0;
`

const ScrollThumb = styled.div`
    width: 206px;
    height: 19px;
    margin: 0 auto 0 0;
    background: #cdcdcd;
`

const ScrollArrow = styled(PlainButton)`
    width: 21px;
`

const PanelEdge = styled.div`
    height: 7px;
    border-bottom: 1px solid #c4c4c4;
    margin: 0 -7px;
`

const ResourceBar = styled.aside`
    display: flex;
    flex-direction: column;
    border-left: 1px solid #a6a6a6;
    background: #dcdcdc;
`

const ResourceButton = styled(PlainButton)`
    height: ${(p) => p.$height}px;
    width: ${(p) => (p.$active ? 30 : 26)}px;
    margin-left: ${(p) => (p.$active ? -1 : 0)}px;
    padding-right: ${(p) => (p.$active ? 3 : 0)}px;
    border: solid #a6a6a6;
    border-width: ${(p) => (p.$active ? '1px 1px 1px 0' : '0')};
    background: ${(p) => (p.$active ? '#ffffff' : 'none')};
`

const GearButton = styled(PlainButton)`
    height: 26px;
    margin-bottom: 14px;
`

const StatusBar = styled.footer`
    display: grid;
    grid-template-columns: minmax(0, 1255fr) minmax(0, 1305fr);
    height: 22px;
    font-size: 13px;
    font-weight: 700;
    line-height: 20px;

    & > span {
        grid-column: 2;
    }
`

const Taskbar = styled.div`
    height: 4px;
    background: linear-gradient(90deg, #1e2022 0 86%, #3a1c26 95%);
`

const Gauge = styled.div`
    position: absolute;
    right: 1px;
    top: 962px;
    width: 11px;
    height: 74px;
    border: 1px solid #303030;
    border-radius: 6px;
    background: linear-gradient(#3c3c3c 0 52%, transparent 52%), repeating-linear-gradient(#38b048 0 3px, #d8f0d8 3px 4px);
`

const ImeBar = styled.div`
    position: absolute;
    right: 0;
    bottom: 3px;
    display: grid;
    align-items: center;
    width: 164px;
    height: 30px;
    border: 1px solid #b4c4ee;
    background: #fbfcff;

    & > * {
        grid-area: 1 / 1;
    }
`

const ImeIcons = styled.div`
    display: flex;
    justify-content: space-between;
    align-items: center;
    padding: 0 12px 0 6px;
    color: #2878f8;
    font-weight: 700;
    font-size: 18px;
`

const Watermark = styled.span`
    padding: 10px 0 0 23px;
    color: #4a4a4a;
    font-family: 'Liberation Mono', 'Noto Sans CJK SC', monospace;
    font-size: 14px;
    line-height: 18px;
    white-space: nowrap;
    opacity: 0.8;
`

/* ---------- model drawing ---------- */

const holes = [
    [581, 1067, 63, 90], [733, 1065, 63, 90], [869, 1150, 63, 89], [443, 1157, 63, 89], [965, 1303, 63, 88],
    [342, 1313, 63, 87], [298, 1507, 62, 85], [1006, 1497, 62, 85], [315, 1707, 62, 83], [983, 1697, 61, 83],
    [389, 1874, 61, 82], [906, 1867, 60, 82], [506, 1985, 60, 81], [787, 1980, 60, 81], [646, 2022, 60, 80],
]

const grooves = [
    [636, 'boss'], [727, 'groove'], [750, 'boss'], [773, 'groove'], [797, 'boss'], [820, 'groove'], [845, 'boss'], [868, 'groove'], [891, 'boss'],
]

const pockets = [
    [310, 178, 92, 56, -20], [310, 292, 92, 56, -20],
    [441, 154, 156, 56, 3], [441, 214, 158, 56, 8], [441, 276, 158, 54, 8],
    [631, 167, 152, 50, 20], [631, 228, 156, 50, 20], [633, 288, 156, 50, 20],
    [816, 196, 154, 56, 34], [818, 258, 156, 54, 36], [822, 320, 156, 52, 30],
]

const tracePockets = [
    [700, 148, 84, 26, 4], [704, 206, 80, 26, 6], [706, 266, 80, 24, 6], [704, 328, 80, 24, 6],
    [818, 200, 152, 56, 32], [822, 262, 152, 54, 34], [826, 322, 152, 52, 30],
    [1008, 285, 98, 50, 10], [1012, 346, 94, 46, 10],
    [1130, 246, 160, 52, 22], [1140, 312, 156, 48, 20], [1143, 376, 162, 48, 18],
    [1324, 276, 92, 46, 8], [1332, 340, 92, 44, 8], [1340, 394, 92, 48, 8],
    [1450, 290, 120, 46, 12], [1458, 350, 120, 46, 12], [1466, 406, 120, 46, 12],
]

const pocketPath = (x, y, w, h, k) => {
    const r = 14
    const q = Math.min(22, h / 2 - 1)
    return `M${x + r} ${y}L${x + w - r} ${y + k}q${r} 2 ${r} ${q}v${h - 2 * q}q0 ${q} ${-r} ${q - 2}L${x + r} ${y + h - 2}q${-r} -2 ${-r} ${-q + 2}v${-(h - 2 * q)}q0 ${-q} ${r} ${-q}z`
}

const webPath = (x, y, doubled = true) =>
    [0, 1, 2]
        .map((i) => {
            const t = y + i * 60
            const outer = `M${x - 18} ${t}q14 10 14 30t-14 30M${x + 20} ${t + 4}q-14 10-14 30t14 30`
            const inner = `M${x - 12} ${t}q12 10 12 30t-12 30M${x + 13} ${t + 4}q-11 10-11 30t11 30`
            const node = i < 2 ? `M${x} ${t + 52}l8 10-8 10-8-10z` : ''
            return outer + (doubled ? inner : '') + node
        })
        .join('')

const face =
    'M92 810C115 650 180 560 240 510Q320 421 400 421H480Q740 445 980 497C1090 530 1170 640 1225 780Q1240 830 1250 930Q1240 1250 1192 1540Q1182 1640 1167 1680Q1145 1750 1108 1820Q1030 1935 900 2022L346 1977C240 1965 150 1880 100 1760Q54 1650 54 1560Q52 1500 52 1440Q58 1080 92 810z'

function Edge(props) {
    return <path vectorEffect="non-scaling-stroke" {...props} />
}

function ModelView() {
    return (
        <svg viewBox="1 233 1214 1132" preserveAspectRatio="xMidYMid meet" role="img" aria-label="回转四轴">
            <defs>
                <linearGradient id="wall" x1="0" x2="1">
                    <stop offset="0" stopColor="#3d6218" />
                    <stop offset="0.3" stopColor="#4f7f1d" />
                    <stop offset="0.6" stopColor="#4a7a1b" />
                    <stop offset="1" stopColor="#304d12" />
                </linearGradient>
                <linearGradient id="boss" x1="0" x2="1">
                    <stop offset="0" stopColor="#294211" />
                    <stop offset="0.2" stopColor="#3f6617" />
                    <stop offset="0.45" stopColor="#54841e" />
                    <stop offset="0.65" stopColor="#54841e" />
                    <stop offset="1" stopColor="#35560f" />
                </linearGradient>
                <linearGradient id="groove" x1="0" x2="1">
                    <stop offset="0" stopColor="#33520f" />
                    <stop offset="0.28" stopColor="#5d8e2c" />
                    <stop offset="0.45" stopColor="#4a7819" />
                    <stop offset="0.68" stopColor="#79ae3e" />
                    <stop offset="0.85" stopColor="#44701a" />
                    <stop offset="1" stopColor="#2c4910" />
                </linearGradient>
                <linearGradient id="bore" x1="0" x2="1">
                    <stop offset="0" stopColor="#42691a" />
                    <stop offset="0.4" stopColor="#54841e" />
                    <stop offset="0.7" stopColor="#4c791b" />
                    <stop offset="1" stopColor="#304d12" />
                </linearGradient>
                <linearGradient id="sink" x1="0.200" y1="0" x2="0.400" y2="1">
                    <stop offset="0" stopColor="#2f4318" />
                    <stop offset="0.5" stopColor="#3c5f17" />
                    <stop offset="0.8" stopColor="#5c9028" />
                    <stop offset="1" stopColor="#76a93c" />
                </linearGradient>
                <linearGradient id="steel" x1="0" x2="1">
                    <stop offset="0" stopColor="#5f7b8c" />
                    <stop offset="0.15" stopColor="#90b4cc" />
                    <stop offset="0.8" stopColor="#90b4cc" />
                    <stop offset="1" stopColor="#4f6675" />
                </linearGradient>
            </defs>

            <g transform="translate(350 440) scale(0.574 0.3333)" stroke="#2c3434" strokeWidth="1">
                <Edge
                    fill="url(#steel)"
                    d="M410 83C560 82 800 110 960 158Q1060 190 1120 270C1180 360 1220 520 1245 700L1265 930Q1255 1130 1217 1460C1195 1660 1140 1830 1083 1930Q1000 2050 850 2068L379 2020C210 1985 90 1850 50 1650Q30 1540 37 1330L50 930Q60 640 85 480C110 320 200 190 270 140Q340 88 410 83z"
                />
                <Edge
                    fill="url(#wall)"
                    d="M405 95C560 92 800 120 955 168Q1060 200 1118 280C1180 370 1220 530 1245 700L1265 930Q1255 1130 1215 1460Q1200 1600 1168 1680L900 1700H300L56 1610Q34 1540 37 1330L50 930Q60 640 85 480C110 320 200 210 270 155Q340 100 405 95z"
                />
                <Edge
                    fill="#35540f"
                    stroke="none"
                    d="M400 121C560 118 800 142 960 190Q1050 220 1110 300Q1200 470 1240 760L1258 930L1195 1500L900 1700H300L44 1500V1330L54 930Q64 660 88 520C115 360 200 250 280 180Q340 124 400 121z"
                />
                <Edge
                    fill="url(#wall)"
                    stroke="none"
                    d="M400 149C560 145 800 168 960 214Q1050 250 1105 330Q1195 500 1240 800L1258 930L1195 1500L900 1700H300L46 1500V1330L58 930Q70 690 92 550C115 400 210 280 290 200Q350 150 400 149z"
                />
                <Edge fill="none" d="M88 520C115 360 200 250 280 180Q340 124 400 121C560 118 800 142 960 190Q1050 220 1110 300M92 550C115 400 210 280 290 200Q350 150 400 149C560 145 800 168 960 214" />
                {[0, 1, 2].map((i) => (
                    <Edge
                        key={i}
                        fill="none"
                        strokeWidth="2"
                        d={`M${90 + i * 3} ${560 + i * 60}C120 ${430 + i * 50} 200 ${300 + i * 55} 275 ${228 + i * 60}M${1110} ${330 + i * 50}Q1200 ${480 + i * 60} 1236 ${760 + i * 30}`}
                    />
                ))}
                <Edge
                    fill="#4c7b1c"
                    d="M82 800C105 640 200 440 280 390Q360 338 442 337C640 338 850 372 985 410Q1080 440 1140 540Q1220 680 1244 850L1255 930L1190 1500L900 1700H300L50 1500V1330z"
                />
                <Edge
                    fill="#35540f"
                    d="M84 830C105 660 200 470 285 415Q360 363 442 362C640 362 850 396 985 434Q1075 465 1135 560Q1215 700 1244 860L1255 930L1190 1500L900 1700H300L52 1500V1330z"
                />
                <Edge
                    fill="url(#steel)"
                    d="M90 815C105 640 180 530 250 460Q330 388 430 388C640 396 830 425 960 455Q1060 480 1130 560Q1210 680 1243 850L1252 930L1190 1500L900 1700H300L54 1500V1330z"
                />
                <Edge fill="#3c5c17" d={face} />
                <Edge fill="none" stroke="#56707f" strokeWidth="3" d="M1252 940Q1240 1250 1195 1540Q1185 1640 1168 1690" />
                <Edge fill="none" d="M438 95v26M442 337v26M985 410v26" />

                <Edge fill="#6a9c30" stroke="none" d="M125 430l12-6 3 26-12 12q-10-14-3-32zM123 494l12-6 3 26-12 12q-10-14-3-32zM120 552l12-6 2 20-12 14q-6-14-2-28z" />
                <Edge fill="#6a9c30" stroke="none" d="M80 600l6 2 4 24-10 8zM1220 580l8 14-2 18-8-6zM1230 640l8 14-3 20-6-10z" />

                {/* wall pockets */}
                {pockets.map(([x, y, w, h, k]) => (
                    <Fragment key={`${x}-${y}`}>
                        <Edge fill="#2c460f" d={pocketPath(x, y, w, h, k)} />
                        <Edge fill="#54841e" d={pocketPath(x + 2, y, w - 4, h * 0.6, k)} />
                    </Fragment>
                ))}

                <g fill="none" stroke="#3468c8">
                    <Edge d={webPath(290, 200, false)} />
                    <Edge d={webPath(422, 156)} />
                    <Edge d={webPath(614, 156)} />
                    <Edge d="M275 210V380M298 195V372M305 245l100-22M308 262l96-20M312 278l92-20M316 292l86-20M340 215v80M370 212v70M320 268l72-16v14l-72 16zM400 158h40M597 160h34M404 330h34M600 334h32" />
                    <Edge
                        strokeWidth="2"
                        d="M150 388l-12 18 14 2-16 20 14 4M148 446l-12 18 12 4-14 20M150 508l-18 8 16 8-20 20M138 400l12 20M134 462l14 18M130 520l14 16M1096 440l26 12-20 14 26 6M1104 440v40l14-20"
                    />
                    <Edge d="M1010 250h80M1015 262h80M1020 274h82M1030 240v50M1050 244v60M1040 300l40 34M1060 290l36 60M1030 300l50 20M975 225l30 30v110" />
                </g>

                {/* toolpath strip */}
                <g fill="none" stroke="#a89a68">
                    {tracePockets.map(([x, y, w, h, k]) => (
                        <Edge
                            key={`${x}-${y}`}
                            d={pocketPath(x, y, w, h, k) + (h > 40 ? pocketPath(x + 8, y + 16, w - 16, h - 16, k) : '')}
                        />
                    ))}
                    <Edge d="M695 140v36l400 52L1520 290M705 146l290 36 525 72M705 166l300 38 515 76M1040 190l480 66M1040 200l480 68M780 376l300 50 440 64M790 384l300 48 430 62M960 410l560 76M1050 457l470 64M1130 455l390 34" />
                </g>
                <g fill="none" stroke="#00f0f0" strokeWidth="1.500">
                    {[[800, 190], [988, 226], [1120, 238], [1312, 268], [1440, 282]].map(([x, y], i) => (
                        <Edge key={x} d={webPath(x, y, i === 0)} />
                    ))}
                    {tracePockets.slice(7).map(([x, y, w, h, k]) => (
                        <Edge key={`${x}-${y}`} strokeDasharray="24 5" d={pocketPath(x - 8, y - 5, w + 16, h + 12, k)} />
                    ))}
                    <Edge d="M780 187l340 52 400 52M815 256l160 32M820 318l160 28M780 366l200 36 540 80M1010 250l80 8M1012 262l80 8M1020 276l60 8M1450 360l60 6M1460 380l50 6M1470 396l50 4" />
                </g>
                <Edge
                    fill="none"
                    stroke="#ff2020"
                    strokeDasharray="5 4"
                    d="M895 218l190 20 110 14 310 34M905 338l180-24 130 70 160 20 140 26M1370 238l150 22M1040 290l60 30M1385 360l130 44M898 220v24M1370 240l16 120"
                />
                <Edge
                    fill="none"
                    stroke="#2038e8"
                    strokeDasharray="4 6"
                    d="M895 235l12 110M1218 262l14 140M1370 244l16 130M1060 270v50M735 226v60M722 340v20"
                />
                <Edge
                    fill="none"
                    stroke="#20e020"
                    strokeWidth="3"
                    strokeDasharray="2 8"
                    d="M812 196v10M790 360h24M990 236l8 10M985 395h14M1115 250l4 20M1125 410l10 4M1300 262l10 20M1320 440l10-10M1436 290l8 10M1448 450l8 8"
                />
                <ellipse cx="1185" cy="436" rx="8" ry="13" fill="#f8b48c" stroke="#f8a070" />

                {/* boss with its four grooves */}
                {grooves.map(([top, paint], i) => (
                    <ellipse
                        key={top}
                        vectorEffect="non-scaling-stroke"
                        cx={646 + i * 0.7}
                        cy={top + 604}
                        rx={paint === 'boss' && i > 0 && i < 8 ? 433 : 437}
                        ry="604"
                        fill={`url(#${paint})`}
                    />
                ))}
                <Edge fill="none" d="M642 727v24M644 773v24M646 820v25M647 868v23" />
                <ellipse vectorEffect="non-scaling-stroke" cx="652" cy="1531" rx="443" ry="604" fill="#3c5c17" />

                {holes.map(([x, y, rx, ry]) => (
                    <Fragment key={`${x}-${y}`}>
                        <ellipse vectorEffect="non-scaling-stroke" cx={x} cy={y} rx={rx} ry={ry} fill="url(#sink)" />
                        <ellipse vectorEffect="non-scaling-stroke" cx={x} cy={y - 18} rx={rx * 0.72} ry={ry * 0.72} fill="url(#bore)" />
                        <Edge
                            fill="#2f4418"
                            d={`M${x - rx * 0.46} ${y - ry * 0.74}q${rx * 0.46} ${ry * 0.34} ${rx * 0.92} 0q${-rx * 0.46} ${-ry * 0.26} ${-rx * 0.92} 0z`}
                        />
                    </Fragment>
                ))}

                {/* square recess and centre bore */}
                <Edge fill="none" d="M478 1244L874 1295Q884 1300 883 1320L830 1845Q828 1855 818 1852L434 1803Q426 1800 427 1785L466 1260Q468 1244 478 1244z" />
                <Edge fill="#2c4711" d="M873 1295Q884 1300 883 1320L832 1835L826 1790z" />
                <Edge fill="#54841e" d="M430 1740L826 1790L820 1852L434 1803Q426 1800 427 1785z" />
                <Edge fill="none" d="M436 1742v60M814 1789l2 62" />
                <ellipse vectorEffect="non-scaling-stroke" cx="649" cy="1492" rx="59" ry="80" fill="url(#bore)" />
            </g>

            {/* machine and work coordinate systems */}
            <g fill="none" strokeWidth="2">
                <path stroke="#0a2cb4" d="M724 958l12-72" />
                <path stroke="#2fa438" d="M724 958l92 5" />
                <path stroke="#ee3434" d="M724 958l4 58" />
            </g>
            <path fill="#0a2cb4" d="M736 875l2 18h-7zM729 916l3 19h-6z" />
            <path fill="#3cb844" d="M827 965l-21-4v5zM775 962l-19-4v5z" />
            <path fill="#ee3434" d="M728 1023l-4-15h7zM726 992l-3-12h5z" />
            <g fontFamily="Liberation Sans" fontSize="14">
                <text x="715" y="873" fill="#1a4cff">ZM</text>
                <text x="710" y="911" fill="#1a4cff">ZC</text>
                <text x="762" y="978" fill="#2f9a34">YC</text>
                <text x="808" y="980" fill="#2f9a34">YM</text>
                <text x="706" y="1005" fill="#d83a30">XC</text>
                <text x="708" y="1034" fill="#d83a30">XM</text>
            </g>

            {/* view triad */}
            <path fill="none" stroke="#a4a4a4" d="M88 1225l42 3v24l-4 34-42-3-1-20zM88 1225v24l42 3M88 1249l-4 34" />
            <path fill="none" stroke="#0a2cb4" strokeWidth="5" d="M109 1239l3-28" />
            <path fill="#0a2cb4" d="M115 1196l3 17h-11z" />
            <path fill="none" stroke="#2a9430" strokeWidth="4" d="M131 1257l32 2" />
            <path fill="#2fa438" d="M180 1261l-19-7-1 11z" />
            <path fill="none" stroke="#ee3434" strokeWidth="5" strokeLinecap="round" d="M107 1268v20" />
            <path fill="#ee3434" d="M108 1298l-6-14h11z" />
            <g fontFamily="Liberation Sans" fontSize="12">
                <text x="112" y="1193" fill="#1a4cff">Z</text>
                <text x="185" y="1266" fill="#2f9a34">Y</text>
                <text x="104" y="1308" fill="#d83a30">X</text>
            </g>
        </svg>
    )
}

/* ---------- tree ---------- */

function Connector({ depth, open, last }) {
    return (
        <svg width="19" height="24" aria-hidden="true">
            {depth > 0 && <path d={open || last ? 'M8.500 0v12' : 'M8.500 0v24'} stroke="#888" strokeDasharray="1 1" />}
            <path d="M9 11.500h10" stroke="#888" strokeDasharray="1 1" />
            {open && (
                <>
                    <rect x="3.500" y="6.500" width="10" height="10" fill="#fff" stroke="#c0c0c0" />
                    <path d="M5 11.500h7" stroke="#111" />
                </>
            )}
        </svg>
    )
}

function OperationRow({ op }) {
    return (
        <Row $pending={op.pending} $selected={op.selected}>
            <td>
                <TitleCell>
                    <Indent $depth={op.depth} />
                    <Connector depth={op.depth} open={op.open} last={op.last} />
                    {op.status && <TypeSlot><Icon name={op.status} size={15} /></TypeSlot>}
                    <TypeSlot><Icon name={op.type} size={16} /></TypeSlot>
                    <TitleText $selected={op.selected}>{op.title}</TitleText>
                </TitleCell>
            </td>
            <td>{op.change && <Icon name="cutter" size={16} />}</td>
            <td>{op.path && <Icon name={op.path} size={16} />}</td>
            <td>{op.ipw && <Icon name="cross" size={16} />}</td>
            <td />
            <td>{op.tool}</td>
            <td>{op.toolDesc}</td>
            <td>{op.desc}</td>
            <td />
        </Row>
    )
}

function Navigator() {
    return (
        <Panel>
            <PanelTitle><i />工序导航器</PanelTitle>
            <PanelTools>
                <ViewButton $on aria-label="程序顺序视图"><Icon name="viewProgram" /></ViewButton>
                <ViewButton aria-label="机床视图"><Icon name="viewTool" /></ViewButton>
                <ViewButton aria-label="几何视图"><Icon name="viewGeometry" /></ViewButton>
                <ViewButton aria-label="加工方法视图"><Icon name="viewMethod" /></ViewButton>
                <ViewButton $framed="#6a6a6a" aria-label="新建窗口"><Icon name="windowAdd" /></ViewButton>
                <ViewButton $framed="#bcbcbc" aria-label="关闭窗口"><Icon name="windowDelete" /></ViewButton>
            </PanelTools>
            <TreeFrame>
                <TreeScroll>
                    <TreeTable>
                        <colgroup>
                            <col width="250" />
                            <col width="63" />
                            <col width="63" />
                            <col width="63" />
                            <col width="188" />
                            <col width="188" />
                            <col width="188" />
                            <col width="188" />
                            <col />
                        </colgroup>
                        <thead>
                            <tr>{columns.map((name) => <HeadCell key={name}>{name}</HeadCell>)}</tr>
                        </thead>
                        <tbody>
                            {operations.map((op) => <OperationRow key={op.title} op={op} />)}
                            {emptyRows.map((n) => (
                                <Row key={n}>{columns.map((name) => <td key={name} />)}</Row>
                            ))}
                        </tbody>
                    </TreeTable>
                </TreeScroll>
                <ScrollTrack>
                    <ScrollArrow aria-label="向左"><Icon name="left" size={14} /></ScrollArrow>
                    <ScrollThumb />
                    <ScrollArrow aria-label="向右"><Icon name="right" size={14} /></ScrollArrow>
                </ScrollTrack>
            </TreeFrame>
            <PanelEdge />
        </Panel>
    )
}

const resources = [
    ['parts', 42], ['bracketGray', 42], ['opNav', 46], ['gridTool', 39], ['machineWrench', 42], ['nodes', 43],
    ['bracketDim', 43], ['blockZoom', 43], ['globeWindow', 62], ['clock', 44], ['toolFolder', 42], ['machineGo', 42],
]

const quick = [
    '|', 'save', '|', 'undo', 'v', '|', 'cut', 'copy', 'paste', 'pick', '|', 'focus', 'v', '|', 'mic', '|', 'gesture', '|', 'windows',
]

function App() {
    return (
        <Page>
            <GlobalStyle />
            <Header>
                <TopShade />
                <TitleRow>
                    <QuickBar>
                        <Logo>NX</Logo>
                        {quick.map((name, i) => {
                            if (name === '|') return <QuickDivider key={i} />
                            if (name === 'v') return <Icon key={i} name="caretDown" size={8} />
                            return <PlainButton key={i} aria-label={name}><Icon name={name} size={17} /></PlainButton>
                        })}
                        <PlainButton><Icon name="window" size={17} />窗口<Icon name="caretDown" size={8} /></PlainButton>
                        <Icon name="overflow" size={10} />
                    </QuickBar>
                    <AppTitle>NX - 加工</AppTitle>
                    <WindowBar>
                        <Brand>SIEMENS</Brand>
                        <PlainButton aria-label="最小化"><Icon name="minimize" size={13} /></PlainButton>
                        <PlainButton aria-label="还原"><Icon name="restore" size={13} /></PlainButton>
                        <PlainButton aria-label="关闭"><Icon name="closeWin" size={13} /></PlainButton>
                    </WindowBar>
                </TitleRow>
                <MenuRow>
                    <FileTab>文件(F)</FileTab>
                    {menus.map((name, i) => <MenuTab key={i} $active={i === 10}>{name}</MenuTab>)}
                    <SearchArea>
                        <SearchBox>
                            <input placeholder="在此输入以搜索" aria-label="搜索" />
                            <Icon name="search" size={17} />
                        </SearchBox>
                        <PlainButton aria-label="全屏"><Icon name="expand" size={17} /></PlainButton>
                        <PlainButton aria-label="折叠"><Icon name="chevronUp" size={16} /></PlainButton>
                        <PlainButton aria-label="帮助"><Icon name="help" size={16} /></PlainButton>
                        <PlainButton aria-label="提示"><Icon name="bang" size={16} /></PlainButton>
                    </SearchArea>
                </MenuRow>
            </Header>

            <Ribbon>
                <RibbonGroup>
                    <IconGrid>
                        {ribbonRows[0].map((name) => <PlainButton key={name} aria-label={name}><Icon name={name} /></PlainButton>)}
                        {ribbonRows[1].map((name) => <PlainButton key={name} aria-label={name}><Icon name={name} /></PlainButton>)}
                    </IconGrid>
                    <Scroller>
                        <Icon name="caretUp" size={7} />
                        <Icon name="caretDown" size={7} />
                        <Icon name="overflow" size={9} />
                    </Scroller>
                    <GroupCaption>联系浩强：Kasard@qq.com  www.gripwhy.com</GroupCaption>
                    <CornerCaret><Icon name="caretDown" size={7} /></CornerCaret>
                </RibbonGroup>
                <CornerCaret $push><Icon name="caretDown" size={7} /></CornerCaret>
            </Ribbon>

            <SelectionBar>
                <MenuButton>
                    <Icon name="menu" size={11} />
                    <span>菜单(<u>M</u>)</span>
                    <Icon name="caretDown" size={8} />
                </MenuButton>
                <Divider $after={37} />
                <Divider $after={12} />
                <SelectBox $width={183}>
                    <select aria-label="选择类型"><option>刀轨</option></select>
                    <Icon name="caretDown" size={10} />
                </SelectBox>
                <FilterButton aria-label="过滤"><Icon name="filter" size={17} /></FilterButton>
                <SelectBox $width={192}>
                    <select aria-label="选择范围"><option>整个装配</option></select>
                    <Icon name="caretDown" size={10} />
                </SelectBox>
                <Divider $before={11} $after={9} />
                <ToggleButton $on aria-label="MCS"><Icon name="mcs" size={20} /></ToggleButton>
                <ToggleButton $on aria-label="WCS"><Icon name="wcs" size={20} /></ToggleButton>
                <ToggleButton aria-label="隐藏"><Icon name="eyesOff" size={20} /></ToggleButton>
                <Divider $before={5} />
                <CornerCaret $push><Icon name="caretDown" size={7} /></CornerCaret>
            </SelectionBar>

            <Main>
                <ViewColumn>
                    <Tabs>
                        <DocTab><Icon name="discover" size={16} /><span>发现中心</span></DocTab>
                        <DocTab><Icon name="tabZig" size={17} /><span>02-1.prt</span><Icon name="tabDoc" size={13} /></DocTab>
                        <DocTab $active>
                            <Icon name="tabZig" size={17} /><span>回转四轴.prt</span><Icon name="tabDoc" size={13} /><Icon name="close" size={9} />
                        </DocTab>
                    </Tabs>
                    <Canvas><ModelView /></Canvas>
                </ViewColumn>

                <SideBar>
                    {sideTools.map((name) => <PlainButton key={name} aria-label={name}><Icon name={name} /></PlainButton>)}
                    <SideRule />
                    <SideEnd><Icon name="caretLeft" size={8} /></SideEnd>
                </SideBar>

                <Navigator />

                <ResourceBar>
                    <GearButton aria-label="设置"><Icon name="gear" size={16} /></GearButton>
                    {resources.map(([name, height]) => (
                        <ResourceButton key={name} $height={height} $active={name === 'opNav'} aria-label={name}>
                            <Icon name={name} />
                        </ResourceButton>
                    ))}
                </ResourceBar>
            </Main>

            <StatusBar><span>总计 1</span></StatusBar>
            <Taskbar />

            <Gauge />
            <ImeBar>
                <ImeIcons>
                    <Icon name="imeLogo" size={20} />
                    中
                    <Icon name="imeMoon" size={17} />
                    <Icon name="imePunct" size={17} />
                    <Icon name="imeGear" size={18} />
                </ImeIcons>
                <Watermark>UG爱好者论坛@lyzy</Watermark>
            </ImeBar>
        </Page>
    )
}

export default App
